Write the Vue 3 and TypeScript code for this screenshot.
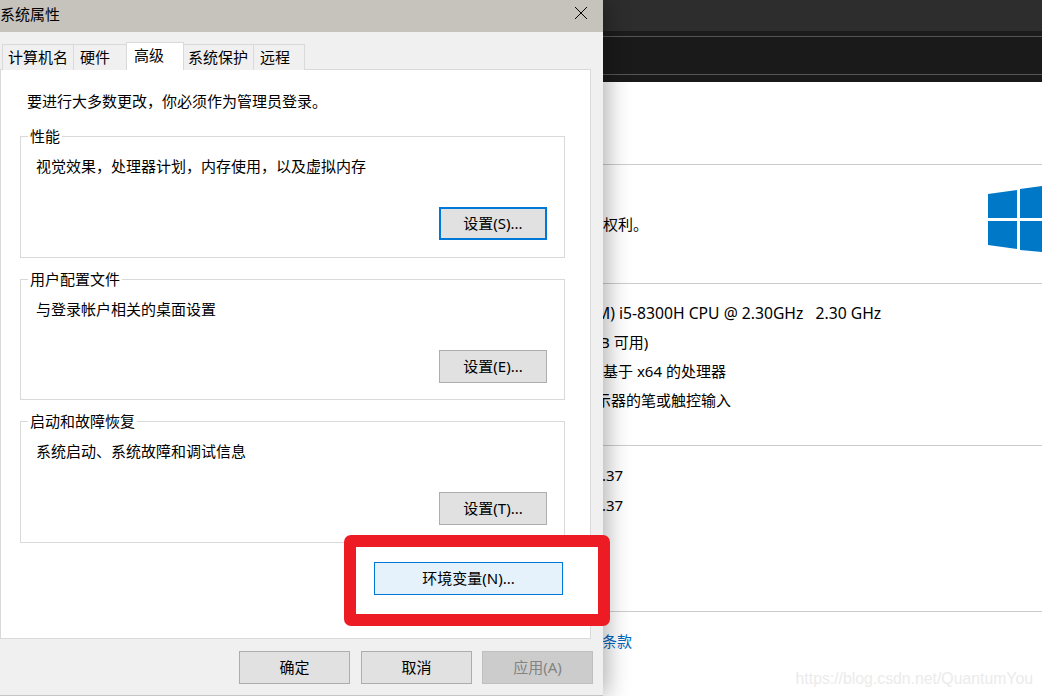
<script setup lang="ts">
interface Group {
  title: string
  desc: string
  action: string
  focused?: boolean
}

const tabs = ['计算机名', '硬件', '高级', '系统保护', '远程']
const activeTab = '高级'

const groups: Group[] = [
  { title: '性能', desc: '视觉效果，处理器计划，内存使用，以及虚拟内存', action: '设置(S)...', focused: true },
  { title: '用户配置文件', desc: '与登录帐户相关的桌面设置', action: '设置(E)...' },
  { title: '启动和故障恢复', desc: '系统启动、系统故障和调试信息', action: '设置(T)...' },
]

const specs = ['M) i5-8300H CPU @ 2.30GHz\u00a0\u00a0 2.30 GHz', 'B 可用)', '基于 x64 的处理器', '示器的笔或触控输入']
</script>

<template>
  <div class="desktop">
    <div class="backdrop">
      <div class="bar-top"></div>
      <div class="bar-dark"></div>
      <div class="bar-foot"></div>
      <div class="blank"></div>
      <section class="sect sect-copy">
        <p class="copy">权利。</p>
        <svg class="winlogo" width="54" height="66" viewBox="0 0 54 66">
          <polygon points="0,8 29,4 29,32 0,32" />
          <polygon points="32,3 54,0 54,32 32,32" />
          <polygon points="0,35 29,35 29,63 0,59" />
          <polygon points="32,35 54,35 54,66 32,64" />
        </svg>
      </section>
      <section class="sect sect-specs">
        <p v-for="row in specs" :key="row" class="row row-spec">{{ row }}</p>
      </section>
      <section class="sect sect-version">
        <p class="row row-ver">.37</p>
        <p class="row row-ver">.37</p>
      </section>
      <section class="sect sect-link">
        <a class="terms">条款</a>
      </section>
    </div>

    <div class="dialog">
      <header class="titlebar">
        <span>系统属性</span>
        <svg class="close" width="12" height="12" viewBox="0 0 12 12">
          <path d="M0 0 12 12M12 0 0 12" stroke="#000" stroke-width="1" fill="none" />
        </svg>
      </header>

      <nav class="tabs">
        <div
          v-for="tab in tabs"
          :key="tab"
          class="tab"
          :class="{ active: tab === activeTab }"
        >
          {{ tab }}
        </div>
      </nav>

      <div class="panel">
        <p class="notice">要进行大多数更改，你必须作为管理员登录。</p>
        <div v-for="group in groups" :key="group.title" class="group">
          <span class="legend">{{ group.title }}</span>
          <p class="desc">{{ group.desc }}</p>
          <button class="btn" :class="{ focused: group.focused }">{{ group.action }}</button>
        </div>
        <div class="env-row">
          <button class="btn env">环境变量(N)...</button>
        </div>
      </div>

      <footer class="actions">
        <button class="btn">确定</button>
        <button class="btn">取消</button>
        <button class="btn disabled">应用(A)</button>
      </footer>
    </div>

    <div class="highlight"></div>
    <div class="watermark">https://blog.csdn.net/QuantumYou</div>
  </div>
</template>

<style scoped>
.desktop {
  position: relative;
  width: 1042px;
  height: 696px;
  overflow: hidden;
  background: #fff;
  color: #000;
  font-family: "Noto Sans", "Noto Sans CJK SC", sans-serif;
  font-size: 15px;
}
p {
  margin: 0;
}

.bar-top {
  height: 31px;
  background: #2d2d2d;
}
.bar-dark {
  height: 5px;
  background: #1c1c1c;
  border-bottom: 1px solid #555;
}
.bar-foot {
  height: 37px;
  background: #1a1a1a;
  border-bottom: 1px solid #555;
}
.blank {
  height: 82px;
  border-top: 7px solid #1a1a1a;
  box-sizing: content-box;
}
.sect {
  border-top: 1px solid #ccc;
  padding-left: 592px;
  box-sizing: border-box;
}
.sect-copy {
  height: 119px;
  padding-left: 603px;
  display: flex;
  justify-content: space-between;
  align-items: flex-start;
  width: 1042px;
}
.copy {
  margin-top: 47px;
  line-height: 24px;
}
.winlogo {
  margin-top: 21px;
  flex: none;
}
.winlogo polygon {
  fill: #0078c8;
}
.sect-specs {
  height: 162px;
  padding-top: 15px;
}
.row-spec {
  line-height: 29px;
  white-space: pre;
}
.row-spec:nth-child(1) {
  font-size: 15.7px;
  padding-left: 4px;
}
.row-spec:nth-child(2) {
  padding-left: 8px;
}
.row-spec:nth-child(3) {
  padding-left: 11px;
}
.row-spec:nth-child(4) {
  padding-left: 4px;
}
.sect-version {
  height: 166px;
  padding-top: 14px;
  padding-left: 602px;
}
.row-ver {
  line-height: 30px;
}
.sect-link {
  padding-top: 15px;
  padding-left: 602px;
}
.terms {
  line-height: 29px;
  color: #0067c0;
}

.dialog {
  position: absolute;
  left: 0;
  top: 0;
  width: 603px;
  height: 696px;
  box-sizing: border-box;
  display: flex;
  flex-direction: column;
  background: #f0f0f0;
  border-bottom: 1px solid #c4c4c4;
  box-shadow: 4px 0 22px rgba(0, 0, 0, 0.32);
}
.titlebar {
  height: 32px;
  flex: none;
  display: flex;
  justify-content: space-between;
  align-items: center;
  padding: 0 16px 6px 0;
  box-sizing: border-box;
  background: #c6c3bc;
}
.close {
  display: block;
  margin-top: 0;
}

.tabs {
  display: flex;
  align-items: flex-end;
  height: 38px;
  padding-left: 2px;
  margin-bottom: -1px;
  flex: none;
  position: relative;
  z-index: 1;
}
.tab {
  height: 26px;
  box-sizing: border-box;
  padding: 0 0 0 6px;
  line-height: 25px;
  background: #f0f0f0;
  border: 1px solid #d9d9d9;
  border-bottom: none;
  border-right: none;
}
.tab:nth-child(1) {
  width: 71px;
  padding-left: 5px;
}
.tab:nth-child(2) {
  width: 53px;
}
.tab:nth-child(3) {
  width: 58px;
  height: 28px;
  line-height: 24px;
  padding-left: 7px;
  background: #fff;
  border-right: 1px solid #d9d9d9;
}
.tab:nth-child(4) {
  width: 69px;
  padding-left: 4px;
  border-left: none;
}
.tab:nth-child(5) {
  width: 52px;
  border-right: 1px solid #d9d9d9;
}

.panel {
  width: 591px;
  height: 570px;
  flex: none;
  box-sizing: border-box;
  border: 1px solid #d9d9d9;
  background: #fff;
  padding: 0 0 0 19px;
}
.notice {
  height: 66px;
  padding: 19px 0 0 7px;
  line-height: 24px;
  box-sizing: border-box;
}
.group {
  width: 545px;
  height: 122px;
  box-sizing: border-box;
  border: 1px solid #d9d9d9;
  margin-bottom: 21px;
  padding: 0 17px 17px 15px;
  display: flex;
  flex-direction: column;
}
.group:nth-of-type(2) {
  height: 121px;
  padding-bottom: 16px;
}
.legend {
  align-self: flex-start;
  margin: -11px 0 0 -8px;
  padding: 0 2px;
  background: #fff;
  line-height: 20px;
}
.desc {
  margin-top: 8px;
  line-height: 24px;
}
.btn {
  width: 108px;
  height: 33px;
  padding: 0 0 2px;
  box-sizing: border-box;
  border: 1px solid #adadad;
  background: #e1e1e1;
  color: #000;
  font: inherit;
}
.group .btn {
  margin-top: auto;
  align-self: flex-end;
}
.btn.focused {
  border: 2px solid #0078d7;
}
.env-row {
  display: flex;
  justify-content: flex-end;
  padding-right: 27px;
  margin-top: -2px;
  position: relative;
  z-index: 2;
}
.btn.env {
  width: 189px;
  background: #e5f1fb;
  border-color: #0078d7;
}

.actions {
  display: flex;
  gap: 10px;
  justify-content: flex-end;
  padding: 12px 10px 0 0;
}
.actions .btn {
  width: 111px;
}
.actions .btn:nth-child(2) {
  margin-left: 1px;
}
.btn.disabled {
  background: #cccccc;
  border-color: #bfbfbf;
  color: #838383;
}

.highlight {
  position: absolute;
  left: 344px;
  top: 535px;
  width: 266px;
  height: 91px;
  box-sizing: border-box;
  border: 12px solid #ed1c24;
  border-radius: 7px;
  background: #fff;
  z-index: 1;
}
.watermark {
  position: absolute;
  right: 9px;
  top: 669px;
  color: #ebebeb;
  font-family: "Liberation Sans", sans-serif;
  font-size: 15.8px;
  line-height: 20px;
}
</style>
